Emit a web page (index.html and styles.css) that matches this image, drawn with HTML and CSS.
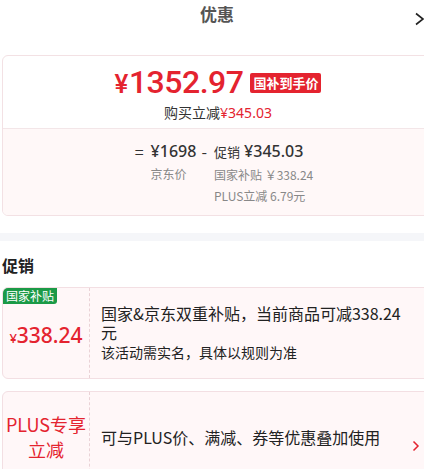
FILE: index.html
```html
<!DOCTYPE html>
<html lang="zh-CN">
<head>
    <meta charset="UTF-8">
    <meta name="viewport" content="width=device-width, initial-scale=1.0">
    <title>优惠</title>
    <link rel="stylesheet" href="styles.css">
</head>
<body>
<div class="page">

    <header class="top">
        <h1>优惠</h1>
        <span class="close">
            <svg width="12" height="14" viewBox="0 0 12 14"><path d="M2 1.5 L9 7 L2 12.5" fill="none" stroke="#222" stroke-width="1.6"/></svg>
        </span>
    </header>

    <section class="price-card">
        <div class="price-main">
            <div class="price-line">
                <span class="big"><small>¥</small>1352.97</span>
                <span class="tag">国补到手价</span>
            </div>
            <div class="reduce">购买立减<em>¥345.03</em></div>
        </div>
        <div class="price-calc">
            <div class="calc-col sign">=</div>
            <div class="calc-col">
                <div class="calc-num">¥1698</div>
                <div class="calc-sub">京东价</div>
            </div>
            <div class="calc-col sign">-</div>
            <div class="calc-col">
                <div class="calc-num"><span class="calc-label">促销</span> ¥345.03</div>
                <div class="calc-sub">国家补贴 ￥338.24</div>
                <div class="calc-sub">PLUS立减 6.79元</div>
            </div>
        </div>
    </section>

    <div class="band"></div>

    <h2 class="section-title">促销</h2>

    <div class="promo">
        <div class="promo-left">
            <span class="green-tag">国家补贴</span>
            <span class="promo-price"><small>¥</small>338.24</span>
        </div>
        <div class="promo-body">
            <p class="promo-text">国家&amp;京东双重补贴，当前商品可减338.24元</p>
            <p class="promo-note">该活动需实名，具体以规则为准</p>
        </div>
    </div>

    <div class="promo promo-plus">
        <div class="promo-left">
            <span class="plus-title">PLUS专享<br>立减</span>
        </div>
        <div class="promo-body">
            <p class="promo-text">可与PLUS价、满减、券等优惠叠加使用</p>
        </div>
        <span class="arrow">
            <svg width="8" height="12" viewBox="0 0 8 12"><path d="M1.5 1.5 L6 6 L1.5 10.5" fill="none" stroke="#e4232f" stroke-width="1.5"/></svg>
        </span>
    </div>

</div>
</body>
</html>
```

FILE: styles.css
```css
html, body {
    margin: 0;
    overflow: hidden;
}

body {
    font-family: "Noto Sans CJK SC", sans-serif;
    background-color: #fff;
    color: #333;
}

.page {
    width: 434px;
}

p {
    margin: 0;
}

.top {
    height: 28px;
    display: flex;
    align-items: center;
    justify-content: center;
    position: relative;
}

.top h1 {
    margin: 0;
    font-size: 17px;
    line-height: 28px;
    font-weight: bold;
    color: #555;
}

.close {
    position: absolute;
    right: 8px;
    top: 7px;
}

/* card price */
.price-card {
    margin: 27px 0 0 2px;
    border: 1px solid #f3e1e4;
    border-radius: 6px;
    overflow: hidden;
}

.price-main {
    padding: 8px 0 5px;
    text-align: center;
}

.price-line {
    display: flex;
    align-items: center;
    justify-content: center;
    height: 38px;
}

.big {
    font-family: Roboto, sans-serif;
    font-size: 32px;
    line-height: 34px;
    font-weight: 500;
    color: #e4232f;
    letter-spacing: -0.5px;
}

.big small {
    font-size: 26px;
    margin-right: 1px;
}

.tag {
    margin-left: 7px;
    background-color: #e4232f;
    color: #fff;
    font-size: 13px;
    font-weight: bold;
    line-height: 20px;
    padding: 0 3px;
    border-radius: 2px;
}

.reduce {
    font-size: 14px;
    line-height: 20px;
    color: #333;
}

.reduce em {
    font-style: normal;
    font-family: "Noto Sans", sans-serif;
    color: #e4232f;
}

.price-calc {
    border-top: 1px solid #f3e6e8;
    background-color: #fff8f8;
    padding: 10px 0 9px 16px;
    display: flex;
    justify-content: center;
    gap: 5px;
    margin-right: 4px;
}

.calc-col.sign {
    font-size: 16px;
    line-height: 24px;
    color: #333;
}

.calc-col.sign + .calc-col {
    margin-left: 2px;
}

.calc-num {
    font-family: "Noto Sans", "Noto Sans CJK SC", sans-serif;
    font-size: 16px;
    line-height: 24px;
    font-weight: 500;
    color: #333;
}

.calc-label {
    font-family: "Noto Sans CJK SC", sans-serif;
    font-size: 13px;
    font-weight: normal;
}

.calc-sub {
    font-size: 12px;
    line-height: 21px;
    color: #888;
}

.band {
    margin-top: 17px;
    height: 8px;
    background-color: #f5f6f9;
}

.section-title {
    margin: 12px 0 0 2px;
    font-size: 16px;
    line-height: 24px;
    font-weight: bold;
    color: #222;
}

/* promo cards */
.promo {
    margin: 10px 0 0 2px;
    display: flex;
    align-items: center;
    min-height: 90px;
    border: 1px solid #f3dfe3;
    border-radius: 6px;
    background-color: #fff7f8;
    position: relative;
    overflow: hidden;
}

.promo-plus {
    margin-top: 12px;
}

.promo-left {
    width: 86px;
    align-self: stretch;
    display: flex;
    align-items: center;
    justify-content: center;
    border-right: 1px dashed #ead2d6;
}

.green-tag {
    position: absolute;
    left: 0;
    top: 0;
    background-color: #1b9a47;
    color: #fff;
    font-size: 12px;
    line-height: 16px;
    padding: 0 3px;
    border-radius: 0 0 3px 0;
}

.promo-price {
    font-family: "Noto Sans", sans-serif;
    font-size: 21px;
    font-weight: 500;
    color: #e4232f;
    margin-top: 4px;
}

.promo-price small {
    font-size: 13px;
}

.promo-body {
    padding: 14px 0 14px 11px;
    width: 306px;
}

.promo-text {
    font-size: 16px;
    line-height: 19px;
    color: #222;
}

.promo-note {
    font-size: 14px;
    line-height: 21px;
    color: #222;
}

.plus-title {
    font-size: 18px;
    line-height: 25px;
    color: #e4232f;
    text-align: center;
}

.arrow {
    position: absolute;
    left: 409px;
    top: 41px;
}
```
